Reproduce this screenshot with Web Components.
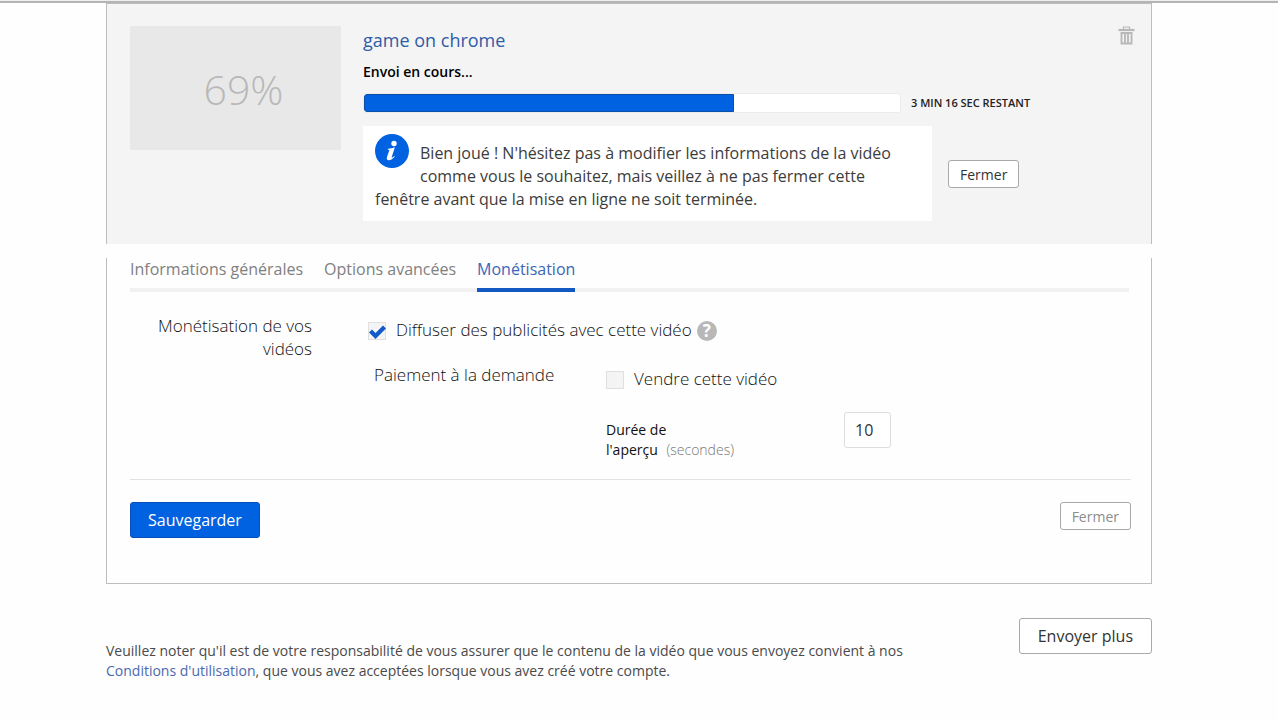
<!DOCTYPE html>
<html lang="fr">
<head>
<meta charset="utf-8">
<title>Envoi de vidéo</title>
<style>
  body {
    margin: 0;
    background: #fefefe;
    color: #222;
    font: 400 16px/23px "Open Sans", "Noto Sans", sans-serif;
  }
</style>
</head>
<body>
<upload-page></upload-page>

<script>
class BaseElement extends HTMLElement {
  constructor() {
    super();
    this.attachShadow({ mode: "open" });
    const template = document.createElement("template");
    template.innerHTML = this.constructor.markup;
    this.shadowRoot.appendChild(template.content.cloneNode(true));
  }
}

class UiButton extends BaseElement {
  static markup = `
    <style>
      :host { display: block; flex: none; }
      button {
        display: block;
        box-sizing: border-box;
        height: 28px;
        padding: 0 11px;
        border: 1px solid #a9a9a9;
        border-radius: 3px;
        background: #fff;
        color: #333;
        font: 400 14px/28px "Open Sans", "Noto Sans", sans-serif;
        cursor: pointer;
      }
      :host([muted]) button { color: #8c8c8c; }
      :host([large]) button, :host([primary]) button {
        height: 36px;
        padding: 0 18px;
        font-size: 16px;
        line-height: 34px;
      }
      :host([primary]) button {
        padding: 0 17px;
        border-color: #0a4fb8;
        background: #0062e1;
        color: #fff;
      }
    </style>
    <button type="button"><slot></slot></button>
  `;
}

class UploadProgress extends BaseElement {
  static markup = `
    <style>
      :host { display: flex; align-items: center; gap: 10px; }
      progress {
        appearance: none;
        flex: 0 1 538px;
        min-width: 0;
        height: 20px;
        box-sizing: border-box;
        border: 1px solid #ececec;
        border-radius: 3px;
        background: #fff;
        overflow: hidden;
      }
      progress::-webkit-progress-bar { background: #fff; }
      progress::-webkit-progress-value {
        box-sizing: border-box;
        border: 1px solid #0a4fa8;
        border-radius: 3px 0 0 3px;
        background: #0062e1;
      }
      span {
        white-space: nowrap;
        font-size: 11px;
        line-height: 20px;
        font-weight: 600;
      }
    </style>
    <progress max="100" value="69" aria-label="Envoi en cours"></progress>
    <span><slot></slot></span>
  `;
}

class InfoNote extends BaseElement {
  static markup = `
    <style>
      :host {
        display: block;
        flex: 0 1 569px;
        box-sizing: border-box;
        padding: 8px 38px 10px 12px;
        background: #fff;
        color: #3c3c3c;
      }
      svg { float: left; display: block; margin-right: 11px; }
      p { margin: 8px 0 0; }
    </style>
    <svg width="34" height="36" viewBox="0 0 34 36" aria-hidden="true">
      <circle cx="17" cy="17" r="17" fill="#0062e1"/>
      <circle cx="19" cy="9.500" r="2.700" fill="#fff"/>
      <path d="M13 14.800c2.500-.2 4.600-.7 6.900-1.500l-3.200 9.600c-.3 1 .5.900 2.500-1l.6.700c-2 2.400-4 3.700-5.900 3.700-2 0-2.500-1.200-1.900-3.200l2.200-6.500c.2-.7-.1-.9-1.400-.9z" fill="#fff"/>
    </svg>
    <p><slot></slot></p>
  `;
}

class UploadHeader extends BaseElement {
  static markup = `
    <style>
      :host {
        display: flex;
        align-items: flex-start;
        gap: 22px;
        padding: 22px 16px 23px 23px;
        border: 1px solid #bdbdbd;
        border-bottom: 0;
        background: #f4f4f4;
      }
      .thumb {
        flex: 0 0 211px;
        height: 124px;
        background: #e8e8e8;
        color: #b8b8b8;
        font-size: 41px;
        font-weight: 300;
        line-height: 126px;
        text-align: center;
        text-indent: 16px;
      }
      .details { flex: 1; min-width: 0; }
      h1 {
        margin: 0;
        color: #2f5ca6;
        font-size: 18px;
        line-height: 28px;
        font-weight: 400;
      }
      .status {
        margin: 7px 0 10px;
        color: #000;
        font-size: 14px;
        line-height: 22px;
        font-weight: 600;
      }
      .note { display: flex; align-items: center; gap: 16px; margin-top: 13px; }
      .trash {
        flex: none;
        padding: 0;
        border: 0;
        background: none;
        line-height: 0;
        cursor: pointer;
      }
    </style>
    <div class="thumb">69%</div>
    <div class="details">
      <h1>game on chrome</h1>
      <p class="status">Envoi en cours...</p>
      <upload-progress>3 MIN 16 SEC RESTANT</upload-progress>
      <div class="note">
        <info-note>Bien joué ! N'hésitez pas à modifier les informations de la vidéo comme vous le souhaitez, mais veillez à ne pas fermer cette fenêtre avant que la mise en ligne ne soit terminée.</info-note>
        <ui-button>Fermer</ui-button>
      </div>
    </div>
    <button class="trash" type="button" aria-label="Supprimer">
      <svg width="17" height="19" viewBox="0 0 17 19" fill="none" stroke="#b8b8b8">
        <path d="M5.500 3V1h6V3" stroke-width="1.200"/>
        <path d="M.5 4h16" stroke-width="2.200"/>
        <path d="M3.500 6.500V17.500h10V6.500M7 6.500V17M10 6.500V17M2.500 7h12" stroke-width="1.900"/>
      </svg>
    </button>
  `;
}

class TabBar extends BaseElement {
  static markup = `
    <style>
      :host {
        display: flex;
        gap: 21px;
        margin-right: 2px;
        border-bottom: 4px solid #f1f1f1;
      }
      ::slotted(button) {
        margin: 0 0 -4px;
        padding: 0 0 7px;
        border: 0;
        border-bottom: 4px solid transparent;
        background: none;
        color: #808080;
        font: inherit;
        cursor: pointer;
      }
      ::slotted(button[aria-selected="true"]) {
        border-bottom-color: #1259c3;
        color: #3c66b8;
      }
    </style>
    <slot></slot>
  `;
}

class CheckField extends BaseElement {
  static markup = `
    <style>
      :host { display: flex; align-items: center; gap: 5px; }
      label { display: flex; align-items: center; gap: 10px; }
      input {
        appearance: none;
        flex: none;
        width: 18px;
        height: 18px;
        margin: 0;
        border: 1px solid #e0e0e0;
        background: #f4f4f4;
      }
      .box { display: grid; margin-top: 3px; }
      .box > * { grid-area: 1 / 1; }
      svg { display: none; pointer-events: none; }
      input:checked + svg { display: block; }
    </style>
    <label>
      <span class="box">
        <input type="checkbox">
        <svg width="18" height="18" viewBox="0 0 18 18" aria-hidden="true">
          <path d="M2.500 9l5 5 9-9" fill="none" stroke="#1259c9" stroke-width="4.200"/>
        </svg>
      </span>
      <slot></slot>
    </label>
    <slot name="help"></slot>
  `;
  connectedCallback() {
    this.shadowRoot.querySelector("input").checked = this.hasAttribute("checked");
  }
}

class HelpIcon extends BaseElement {
  static markup = `
    <style>
      :host { display: block; }
      button {
        display: block;
        width: 20px;
        height: 20px;
        margin-top: 3px;
        padding: 0;
        border: 0;
        border-radius: 50%;
        background: #b8b8b8;
        color: #fff;
        font: 700 17px/20px "Open Sans", "Noto Sans", sans-serif;
      }
    </style>
    <button type="button" aria-label="Aide">?</button>
  `;
}

class MonetisationForm extends BaseElement {
  static markup = `
    <style>
      :host {
        display: grid;
        grid-template-columns: 182px 1fr;
        column-gap: 56px;
        padding: 22px 0 19px;
        border-bottom: 1px solid #e2e2e2;
        font-size: 17px;
        font-weight: 300;
        color: #111;
      }
      .title { padding-left: 20px; text-align: right; }
      .ads { padding-top: 4px; }
      .demand {
        display: grid;
        grid-template-columns: 232px 1fr;
        margin: 22px 0 0 6px;
      }
      .sale { padding-top: 4px; }
      .preview { display: flex; align-items: flex-start; gap: 108px; margin-top: 22px; }
      .preview label {
        width: 130px;
        padding-top: 8px;
        font-size: 14px;
        line-height: 20px;
        font-weight: 400;
      }
      small { margin-left: 5px; color: #777; font-size: 14px; font-weight: 300; }
      .preview input {
        box-sizing: border-box;
        width: 47px;
        height: 36px;
        padding: 0 10px;
        border: 1px solid #ddd;
        border-radius: 3px;
        background: #fff;
        color: #333;
        font: inherit;
        font-size: 16px;
        font-weight: 400;
      }
    </style>
    <div class="title">Monétisation de vos vidéos</div>
    <div class="content">
      <check-field class="ads" checked>Diffuser des publicités avec cette vidéo<help-icon slot="help"></help-icon></check-field>
      <div class="demand">
        <div>Paiement à la demande</div>
        <div>
          <check-field class="sale">Vendre cette vidéo</check-field>
          <div class="preview">
            <label for="duration">Durée de<br>l'aperçu <small>(secondes)</small></label>
            <input id="duration" type="text" value="10">
          </div>
        </div>
      </div>
    </div>
  `;
}

class VideoSettings extends BaseElement {
  static markup = `
    <style>
      :host {
        display: block;
        margin-top: 14px;
        padding: 0 20px 45px 23px;
        border: 1px solid #bdbdbd;
        border-top: 0;
      }
      .actions {
        display: flex;
        align-items: flex-start;
        justify-content: space-between;
        margin-top: 22px;
      }
    </style>
    <tab-bar role="tablist">
      <button type="button" role="tab">Informations générales</button>
      <button type="button" role="tab">Options avancées</button>
      <button type="button" role="tab" aria-selected="true">Monétisation</button>
    </tab-bar>
    <monetisation-form></monetisation-form>
    <div class="actions">
      <ui-button primary>Sauvegarder</ui-button>
      <ui-button muted>Fermer</ui-button>
    </div>
  `;
}

class UploadFooter extends BaseElement {
  static markup = `
    <style>
      :host {
        display: flex;
        align-items: flex-start;
        justify-content: space-between;
        gap: 80px;
        margin-top: 34px;
      }
      p {
        margin: 23px 0 0;
        color: #4a4a4a;
        font-size: 14px;
        line-height: 20px;
      }
      a { color: #4a69b0; text-decoration: none; }
    </style>
    <p>Veuillez noter qu'il est de votre responsabilité de vous assurer que le contenu de la vidéo que vous envoyez convient à nos <a href="#">Conditions d'utilisation</a>, que vous avez acceptées lorsque vous avez créé votre compte.</p>
    <ui-button large>Envoyer plus</ui-button>
  `;
}

class UploadPage extends BaseElement {
  static markup = `
    <style>
      :host { display: block; }
      .bar { height: 1px; border-bottom: 2px solid #b4b4b4; background: #eee; }
      main { padding: 0 126px 40px 106px; }
    </style>
    <div class="bar"></div>
    <main>
      <upload-header></upload-header>
      <video-settings></video-settings>
      <upload-footer></upload-footer>
    </main>
  `;
}

customElements.define("ui-button", UiButton);
customElements.define("upload-progress", UploadProgress);
customElements.define("info-note", InfoNote);
customElements.define("upload-header", UploadHeader);
customElements.define("tab-bar", TabBar);
customElements.define("help-icon", HelpIcon);
customElements.define("check-field", CheckField);
customElements.define("monetisation-form", MonetisationForm);
customElements.define("video-settings", VideoSettings);
customElements.define("upload-footer", UploadFooter);
customElements.define("upload-page", UploadPage);
</script>
</body>
</html>
